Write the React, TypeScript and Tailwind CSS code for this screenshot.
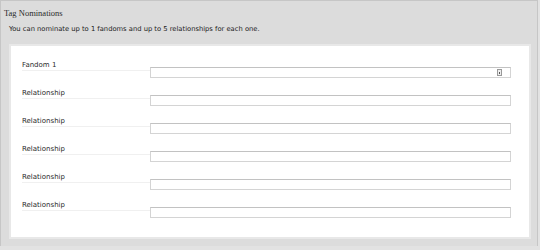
import React from 'react';

const rows = ['Fandom 1', 'Relationship', 'Relationship', 'Relationship', 'Relationship', 'Relationship'];

const TagRow: React.FC<{ label: string; withIcon?: boolean }> = ({ label, withIcon }) => (
  <div className="flex h-[28px]">
    <div className="w-[128px] h-[11px] mt-[2px] leading-[10px] text-[7px] text-[#2b2b2b] border-b border-[#f0f0f0]">
      {label}
    </div>
    <div className="relative mt-[9px] w-[361px] h-[11px] bg-white border border-[#d4d4d4] border-t-[#c2c2c2]">
      {withIcon && (
        <span className="absolute right-[8px] top-[1px] w-[5px] h-[7px] bg-[#eee] border border-[#999] flex items-center justify-center">
          <span className="w-[1px] h-[2px] bg-[#555]" />
        </span>
      )}
    </div>
  </div>
);

export default function App() {
  return (
    <div className="w-[540px] h-[250px] bg-[#e2e2e2]" style={{ fontFamily: '"DejaVu Sans", sans-serif' }}>
      <div className="w-[538px] h-[246px] bg-[#dcdcdc] border border-b-0 border-[#c6c6c6]">
        <h3 className="pl-[3px] pt-[6px] h-[20px] text-[8.5px] leading-[12px] text-[#2a2a2a]" style={{ fontFamily: '"Liberation Serif", serif' }}>
          Tag Nominations
        </h3>
        <p className="pl-[8px] pt-[2px] h-[23px] text-[6.75px] leading-[12px] text-[#222]">
          You can nominate up to 1 fandoms and up to 5 relationships for each one.
        </p>
        <div className="ml-[8px] w-[522px] h-[195px] bg-white border-2 border-[#e8e8e8] pl-[11px] pt-[12px]">
          {rows.map((r, i) => (
            <TagRow key={i} label={r} withIcon={i === 0} />
          ))}
        </div>
      </div>
    </div>
  );
}
